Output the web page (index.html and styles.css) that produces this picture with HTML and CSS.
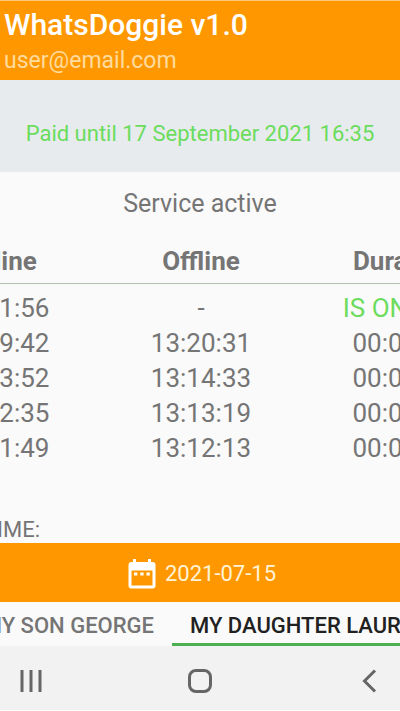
FILE: index.html
```html
<!DOCTYPE html>
<html lang="en">
<head>
<meta charset="utf-8">
<meta name="viewport" content="width=device-width, initial-scale=1">
<title>WhatsDoggie v1.0</title>
<link rel="stylesheet" href="styles.css">
</head>
<body>
<header class="app-bar">
  <h1 class="app-title">WhatsDoggie v1.0</h1>
  <p class="app-user">user@email.com</p>
</header>
<p class="paid">Paid until 17 September 2021 16:35</p>
<main class="content">
  <p class="service">Service active</p>
  <div class="log-view">
    <table class="log">
      <thead>
        <tr><th>Online</th><th>Offline</th><th>Duration</th></tr>
      </thead>
      <tbody>
        <tr><td>13:21:56</td><td>-</td><td class="is-online">IS ONLINE</td></tr>
        <tr><td>13:19:42</td><td>13:20:31</td><td>00:00:49</td></tr>
        <tr><td>13:13:52</td><td>13:14:33</td><td>00:00:41</td></tr>
        <tr><td>13:12:35</td><td>13:13:19</td><td>00:00:44</td></tr>
        <tr><td>13:11:49</td><td>13:12:13</td><td>00:00:24</td></tr>
      </tbody>
    </table>
  </div>
  <p class="total">TIME:</p>
</main>
<button class="date" type="button">
  <svg class="date-icon" viewBox="0 0 28 30" aria-hidden="true">
    <path fill="#fff" fill-rule="evenodd" d="M5 0h3v3h12V0h3v3h1.500a3 3 0 0 1 3 3v20.500a3 3 0 0 1-3 3h-21a3 3 0 0 1-3-3V6a3 3 0 0 1 3-3H5zM3.500 11.500v15h21v-15z"/>
    <path fill="#fff" d="M6 13.500h3.300v3H6zM12.300 13.500h3.300v3h-3.300zM18.500 13.500h3.300v3h-3.300z"/>
  </svg>
  <span>2021-07-15</span>
</button>
<nav class="tabs">
  <a class="tab tab-before" href="#george">MY SON GEORGE</a>
  <a class="tab tab-active" href="#laura" aria-current="page">MY DAUGHTER LAURA</a>
</nav>
<footer class="system-nav">
  <button class="nav-button" type="button" aria-label="Recent apps">
    <svg class="nav-icon" viewBox="0 0 26 26" aria-hidden="true"><path d="M4 2v22M13 2v22M22 2v22"/></svg>
  </button>
  <button class="nav-button" type="button" aria-label="Home">
    <svg class="nav-icon" viewBox="0 0 26 26" aria-hidden="true"><rect x="2.500" y="2.500" width="21" height="21" rx="6.500"/></svg>
  </button>
  <button class="nav-button" type="button" aria-label="Back">
    <svg class="nav-icon" viewBox="0 0 26 26" aria-hidden="true"><path d="M19 2.500 8.500 13 19 23.500"/></svg>
  </button>
</footer>
</body>
</html>
```
FILE: styles.css
```css
* {
  box-sizing: border-box;
}

body {
  display: flex;
  flex-direction: column;
  min-height: 100vh;
  margin: 0;
  overflow-x: hidden;
  background: #fafafa;
  color: #757575;
  font-family: Roboto, "Liberation Sans", sans-serif;
}

h1,
p {
  margin: 0;
}

button {
  border: 0;
  font: inherit;
}

.app-bar {
  padding: 6px 4px 2px;
  border-top: 1px solid #fdc877;
  background: #ff9800;
}

.app-title {
  color: #fff;
  font-size: 30px;
  font-weight: 500;
  line-height: 36px;
}

.app-user {
  color: #ffdb9e;
  font-size: 23px;
  line-height: 35px;
}

.paid {
  padding: 41px 0 26px;
  background: #e7ebee;
  color: #6bdc5c;
  font-size: 22px;
  line-height: 25px;
  text-align: center;
  white-space: nowrap;
}

.content {
  flex: 1;
  padding-top: 14px;
}

.service {
  font-size: 25px;
  line-height: 35px;
  text-align: center;
}

.log-view {
  display: flex;
  justify-content: center;
  overflow: hidden;
  padding: 23px 0 0 2px;
}

.log {
  flex: none;
  width: 152%;
  border-collapse: collapse;
  table-layout: fixed;
  font-size: 26px;
  line-height: 35px;
  text-align: center;
}

.log th {
  padding: 0 0 4px;
  border-bottom: 1px solid #b1c5ac;
  font-weight: 700;
}

.log td {
  padding: 0;
}

.log tbody tr:first-child td {
  padding-top: 7px;
}

.log .is-online {
  color: #6bdc5c;
}

.total {
  display: flex;
  justify-content: flex-end;
  width: 10%;
  padding-top: 51px;
  font-size: 22px;
  line-height: 26px;
}

.date {
  display: flex;
  align-items: center;
  justify-content: center;
  gap: 9px;
  height: 59px;
  padding: 2px 0 0 4px;
  background: #ff9800;
  color: #fff3d6;
  font-size: 22px;
}

.date-icon {
  width: 28px;
  height: 30px;
}

.tabs {
  display: flex;
  overflow: hidden;
  background: #fafafa;
}

.tab {
  flex: none;
  padding: 11px 18px 4px;
  border-bottom: 3px solid transparent;
  color: #757575;
  font-size: 22px;
  font-weight: 500;
  line-height: 26px;
  text-decoration: none;
  white-space: nowrap;
}

.tab-before {
  display: flex;
  justify-content: flex-end;
  width: 43%;
}

.tab-active {
  border-color: #4caf50;
  color: #212121;
}

.system-nav {
  display: flex;
  align-items: center;
  justify-content: space-between;
  height: 65px;
  padding: 6px 18px 0;
  border-bottom: 1px solid #fff;
  background: #f2f2f2;
}

.nav-button {
  display: flex;
  padding: 0;
  background: none;
}

.nav-icon {
  width: 26px;
  height: 26px;
  fill: none;
  stroke: #666;
  stroke-width: 3;
}
```
